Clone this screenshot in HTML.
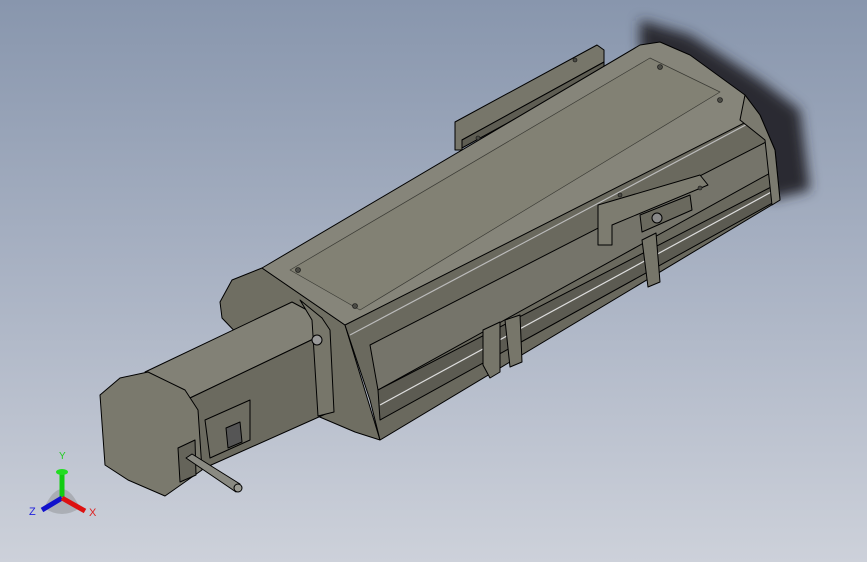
<!DOCTYPE html>
<html><head><style>
html,body{margin:0;padding:0;width:867px;height:562px;overflow:hidden}
body{background:linear-gradient(180deg,#8896ad 0%,#aab3c4 50%,#cdd1da 100%);font-family:"Liberation Sans",sans-serif}
svg{position:absolute;left:0;top:0}
</style></head><body>
<svg width="867" height="562" viewBox="0 0 867 562">
<defs>
<filter id="b" x="-50%" y="-50%" width="200%" height="200%"><feGaussianBlur stdDeviation="6"/></filter>
</defs>
<g stroke="#000" stroke-width="1" stroke-linejoin="round">
<!-- shadow -->
<polygon points="640,20 690,35 760,80 800,110 810,190 770,200 700,100 640,50" fill="#2a2c30" stroke="none" filter="url(#b)"/>
<!-- back plate -->
<polygon points="455,122 597,45 604,50 604,62 462,140 462,150 455,150" fill="#77766a"/>
<polygon points="462,140 604,62 604,70 462,148" fill="#5e5d53"/>
<!-- left end cap -->
<polygon points="220,302 232,280 262,268 345,325 380,440 355,432 315,415 222,318" fill="#6f6e62"/>
<!-- top face -->
<polygon points="262,268 640,45 660,42 690,55 745,95 760,115 370,345 345,325" fill="#86857a"/>
<polygon points="290,270 650,58 720,92 360,310" fill="#828174" stroke="#3a3a34" stroke-width="0.7"/>
<!-- right side face -->
<polygon points="345,325 760,115 775,150 780,200 380,440 370,400" fill="#6a695e"/>
<polygon points="370,345 770,140 772,172 378,390" fill="#75746a"/>
<polygon points="378,390 775,185 778,200 380,420" fill="#5c5b52"/>
<line x1="380" y1="405" x2="775" y2="190" stroke="#ddd" stroke-width="1.2"/>
<line x1="350" y1="335" x2="755" y2="120" stroke="#bbb" stroke-width="1.2"/>
<!-- front right end -->
<polygon points="745,95 760,115 775,150 780,200 772,205 765,140 740,120" fill="#7b7a6f"/>
<!-- slider block -->
<polygon points="598,205 700,175 708,185 612,225 612,245 598,245" fill="#7d7c70"/>
<polygon points="640,215 690,195 692,210 642,232" fill="#6a695e"/>
<circle cx="657" cy="218" r="5" fill="#888"/>
<!-- sensor brackets -->
<polygon points="483,330 500,322 500,372 490,378 483,365" fill="#77766a"/>
<polygon points="505,320 520,315 522,362 510,367" fill="#77766a"/>
<polygon points="642,240 656,233 660,282 648,287" fill="#77766a"/>
<!-- motor -->
<polygon points="145,372 292,302 322,318 328,332 190,398" fill="#828176"/>
<polygon points="190,398 328,332 330,412 200,470" fill="#6b6a5f"/>
<polygon points="100,395 120,378 148,372 185,390 198,410 202,470 165,496 128,480 105,465" fill="#7a796d"/>
<polygon points="205,420 250,400 250,440 210,458" fill="#6e6d62"/>
<polygon points="178,448 195,440 196,475 180,482" fill="#65645a"/>
<polygon points="226,428 240,422 242,442 228,448" fill="#555"/>
<!-- end plate by motor -->
<polygon points="300,300 322,318 330,330 334,412 318,416 312,320" fill="#77766a"/>
<circle cx="317" cy="340" r="5" fill="#999"/>
<!-- shaft -->
<polygon points="186,458 192,454 240,484 236,492" fill="#8a8a82"/>
<circle cx="238" cy="488" r="4" fill="#9a9a92"/>
<!-- holes -->
<g fill="#4a4a44" stroke="#111" stroke-width="0.6">
<circle cx="298" cy="270" r="2.5"/><circle cx="355" cy="306" r="2.5"/>
<circle cx="720" cy="100" r="2.5"/><circle cx="660" cy="67" r="2.5"/>
<circle cx="478" cy="138" r="2"/><circle cx="575" cy="60" r="2"/>
<circle cx="620" cy="195" r="2"/><circle cx="700" cy="188" r="2"/>
</g>
</g>
<!-- axis triad -->
<g>
<path d="M44,508 Q62,470 80,508 Q62,520 44,508Z" fill="#777" opacity="0.35"/>
<line x1="62" y1="497" x2="62" y2="473" stroke="#1c1" stroke-width="5"/>
<ellipse cx="62" cy="472" rx="6" ry="3" fill="#2d2"/>
<line x1="62" y1="498" x2="42" y2="510" stroke="#11c" stroke-width="5"/>
<line x1="62" y1="498" x2="85" y2="511" stroke="#d11" stroke-width="5"/>
<text x="59" y="459" font-size="10" fill="#2c2">Y</text>
<text x="29" y="515" font-size="11" fill="#22d">Z</text>
<text x="89" y="516" font-size="11" fill="#d22">X</text>
</g>
</svg>
</body></html>
